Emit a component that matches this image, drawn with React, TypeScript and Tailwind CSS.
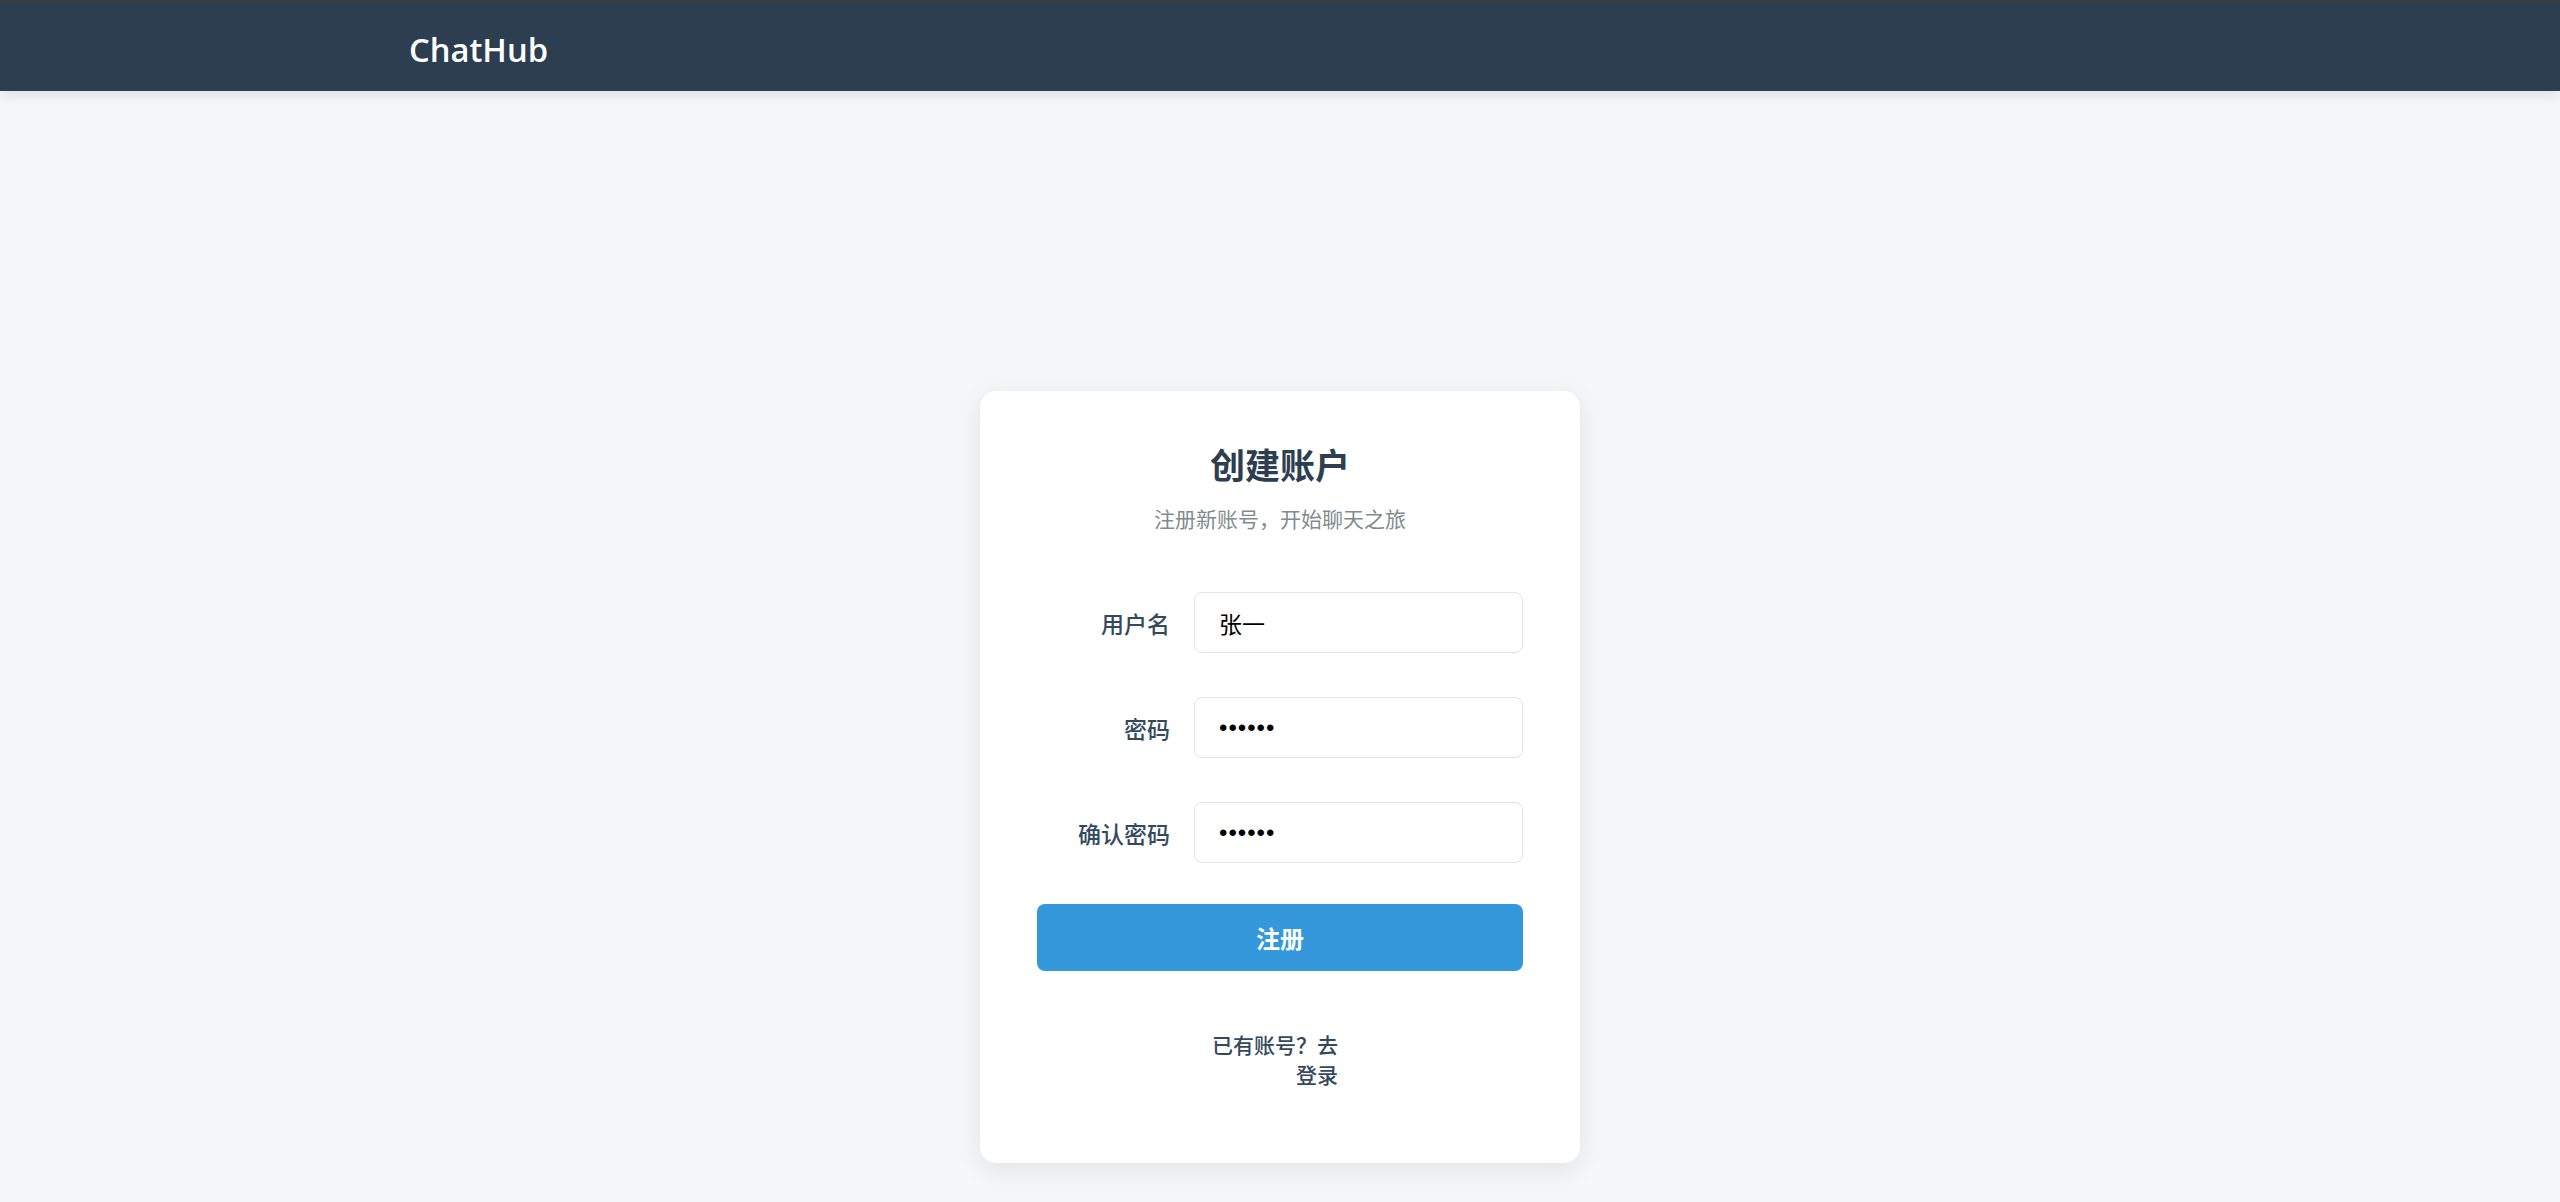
import React from "react";

const cjk = '"Noto Sans CJK SC", "Noto Sans", sans-serif';
const inputFont = '"Liberation Sans", "Noto Sans CJK SC", sans-serif';

function Field({ label, value, type }: { label: string; value: string; type: string }) {
  return (
    <div className="flex items-center">
      <label
        className="w-[157px] shrink-0 pr-[24px] text-right text-[23px] leading-[32px] font-medium text-[#34495e]"
        style={{ fontFamily: cjk }}
      >
        {label}
      </label>
      <input
        type={type}
        defaultValue={value}
        readOnly
        className={
          type === "password"
            ? "h-[61px] min-w-0 flex-1 rounded-[8px] border-[1.5px] border-[#e1e4e8] bg-white px-[24px] text-[24px] tracking-[1px] text-black outline-none"
            : "h-[61px] min-w-0 flex-1 rounded-[8px] border-[1.5px] border-[#e1e4e8] bg-white px-[24px] text-[23px] text-black outline-none"
        }
        style={{ fontFamily: inputFont }}
      />
    </div>
  );
}

export default function App() {
  return (
    <div className="min-h-[1202px] bg-[#f5f7fa]" style={{ fontFamily: cjk }}>
      <header className="relative z-10 flex h-[91px] items-center border-t-2 border-[#3a3d40] bg-[#2c3e50] pl-[409px] pt-[6px] shadow-[0_4px_14px_rgba(0,0,0,0.10)]">
        <span
          className="text-[32.7px] font-semibold text-white"
          style={{ fontFamily: '"Open Sans", "Noto Sans", sans-serif' }}
        >
          ChatHub
        </span>
      </header>
      <main className="flex justify-center pt-[300px]">
        <div className="w-[600px] rounded-[16px] bg-white px-[57px] pt-[51px] pb-[74px] shadow-[0_6px_28px_rgba(0,0,0,0.09)]">
          <h1 className="text-center text-[35px] leading-[44px] font-bold text-[#2c3e50]">创建账户</h1>
          <p className="mt-[16px] text-center text-[21px] leading-[32px] text-[#7f8c8d]">注册新账号，开始聊天之旅</p>
          <div className="mt-[58px] flex flex-col gap-[44px]">
            <Field label="用户名" value="张一" type="text" />
            <Field label="密码" value="123456" type="password" />
            <Field label="确认密码" value="123456" type="password" />
          </div>
          <button className="mt-[41px] h-[67px] w-full rounded-[8px] bg-[#3498db] text-[24px] font-bold text-white">
            注册
          </button>
          <div className="mt-[58px] ml-[174px] w-[127px] text-right text-[21px] leading-[30px] font-medium text-[#34495e]">
            已有账号？去登录
          </div>
        </div>
      </main>
    </div>
  );
}
